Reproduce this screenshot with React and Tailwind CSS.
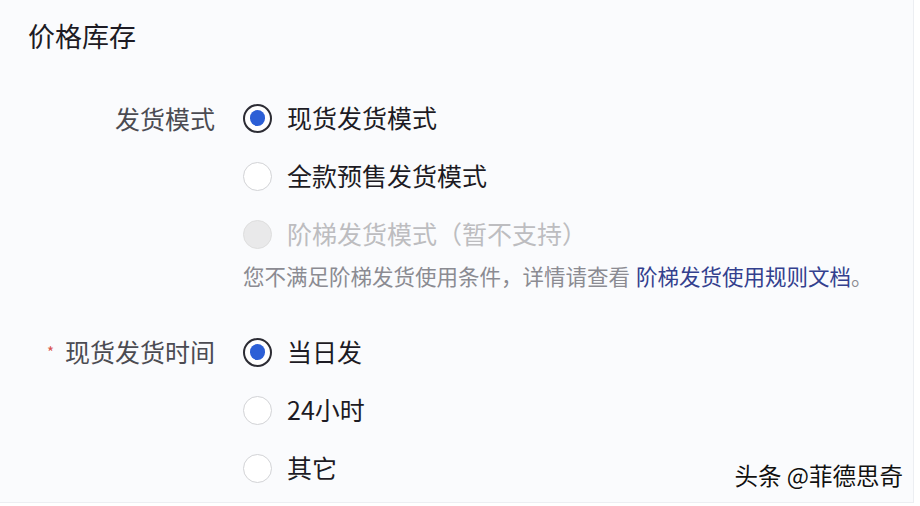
import React from "react";

const font = { fontFamily: '"Noto Sans CJK SC", "Noto Sans", sans-serif' };

function Radio({ state }) {
  if (state === "checked") {
    return (
      <span className="w-[29px] h-[29px] rounded-full border-2 border-[#2c2c34] bg-white flex items-center justify-center shrink-0">
        <span className="w-[15px] h-[16px] rounded-full bg-[#2c5fd6]" />
      </span>
    );
  }
  if (state === "disabled") {
    return <span className="w-[29px] h-[29px] rounded-full border border-[#dedede] bg-[#e9e9ea] shrink-0" />;
  }
  return <span className="w-[29px] h-[29px] rounded-full border border-[#d2d3d6] bg-white shrink-0" />;
}

function Option({ state = "", children }) {
  return (
    <div className="h-[58px] flex items-center gap-[15px]">
      <Radio state={state} />
      <span
        className={
          state === "disabled"
            ? "text-[25px] text-[#bdbdc0]"
            : "text-[25px] text-[#1d1b24]"
        }
      >
        {children}
      </span>
    </div>
  );
}

export default function App() {
  return (
    <div className="w-[920px] h-[506px] bg-white overflow-hidden" style={font}>
      <div className="relative w-[914px] h-[503px] bg-[#fafbfd] border-r border-b border-[#eceef2]">
        {/* 标题 */}
        <div className="pt-[18px] pl-[28px] h-[54px] text-[27px] leading-[36px] text-[#1d1b24]">
          价格库存
        </div>

        {/* 发货模式 */}
        <div className="mt-[35px] flex gap-[28px]">
          <div className="w-[215px] h-[58px] leading-[58px] text-right text-[25px] text-[#4b4b52]">
            发货模式
          </div>
          <div className="flex flex-col">
            <Option state="checked">现货发货模式</Option>
            <Option>全款预售发货模式</Option>
            <Option state="disabled">阶梯发货模式（暂不支持）</Option>
            <div className="h-[26px] leading-[26px] text-[21.5px] text-[#8b8b92] whitespace-nowrap">
              您不满足阶梯发货使用条件，详情请查看
              <span className="ml-[6px] text-[#33408e]">阶梯发货使用规则文档</span>
              。
            </div>
          </div>
        </div>

        {/* 现货发货时间 */}
        <div className="mt-[34px] flex gap-[28px]">
          <div className="w-[215px] h-[58px] flex items-center justify-end gap-[11px] text-[25px] text-[#4b4b52]">
            <span className="text-[15px] text-[#d9534f]">*</span>
            <span>现货发货时间</span>
          </div>
          <div className="flex flex-col">
            <Option state="checked">当日发</Option>
            <Option>24小时</Option>
            <Option>其它</Option>
          </div>
        </div>

        {/* 水印 */}
        <div className="absolute right-[10px] bottom-[14px] text-[23.5px] leading-[26px] text-[#111] [text-shadow:1px_1px_0_#fff,-1px_0_0_#fff]">
          头条 @菲德思奇
        </div>
      </div>
    </div>
  );
}
